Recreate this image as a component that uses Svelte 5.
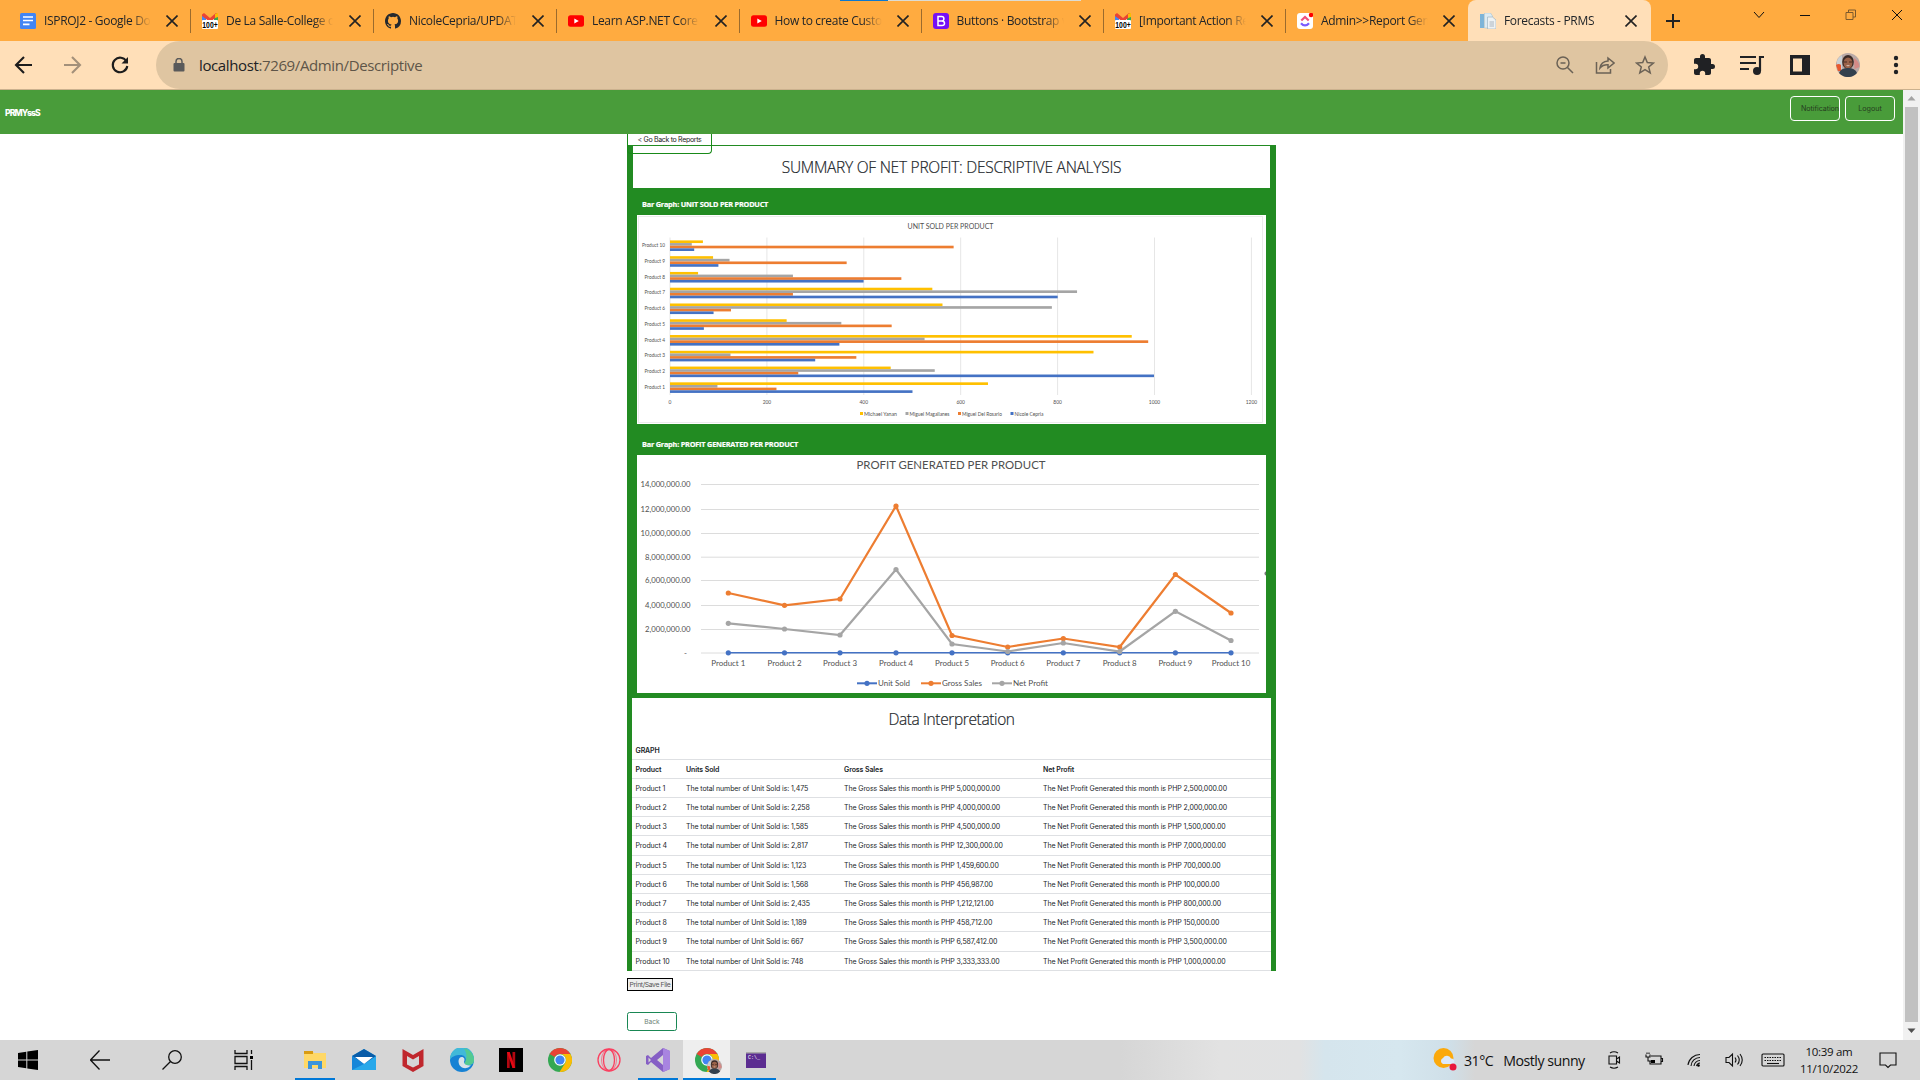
<script>
  const tabs = [
    { icon: 'docs', title: 'ISPROJ2 - Google Docs', w: 182 },
    { icon: 'gmail', title: 'De La Salle-College of', w: 183 },
    { icon: 'github', title: 'NicoleCepria/UPDATED', w: 183 },
    { icon: 'yt', title: 'Learn ASP.NET Core M', w: 182.5 },
    { icon: 'yt', title: 'How to create Custom', w: 182 },
    { icon: 'boot', title: 'Buttons · Bootstrap v5', w: 182.5 },
    { icon: 'gmail', title: '[Important Action Req', w: 182 },
    { icon: 'click', title: 'Admin>>Report Gene', w: 182 },
    { icon: 'page', title: 'Forecasts - PRMS', w: 183, active: true }
  ];

  const barColors = ['#ffc000', '#a5a5a5', '#ed7d31', '#4472c4'];
  // Bar lengths per salesperson, in units sold, top row first
  const bars = [
    { n: 10, v: [68, 45, 586, 50] },
    { n: 9, v: [89, 123, 365, 100] },
    { n: 8, v: [58, 254, 478, 400] },
    { n: 7, v: [542, 841, 254, 801] },
    { n: 6, v: [563, 789, 126, 90] },
    { n: 5, v: [241, 354, 458, 70] },
    { n: 4, v: [954, 526, 988, 350] },
    { n: 3, v: [875, 125, 385, 300] },
    { n: 2, v: [456, 547, 265, 1000] },
    { n: 1, v: [657, 98, 220, 501] }
  ];
  const ux = 0.484;
  const legend1 = [
    { x: 223, name: 'Michael Yanan', w: 33 },
    { x: 268.5, name: 'Miguel Magallanes', w: 40 },
    { x: 321, name: 'Miguel Del Rosario', w: 40 },
    { x: 373.5, name: 'Nicole Cepria', w: 29 }
  ];

  const px = [91.3, 147.5, 203, 259, 315, 370.7, 426.3, 482.7, 538.4, 594];
  const gross = [138, 150.3, 144, 51, 180.5, 192, 183.5, 192, 119.5, 158];
  const net = [168.3, 174, 180, 114.5, 189, 196.5, 188, 196.5, 156.3, 185.5];
  const units = px.map(() => 197.8);
  const grid = [29.5, 54.5, 78.5, 102.2, 125.5, 150.5, 174.5, 198];
  const amounts = ['14,000,000.00', '12,000,000.00', '10,000,000.00', '8,000,000.00', '6,000,000.00', '4,000,000.00', '2,000,000.00', '-'];
  const line = (ys) => ys.map((y, i) => `${px[i]},${y}`).join(' ');
  const series = [
    { c: '#4472c4', y: units, w: 1.6 },
    { c: '#ed7d31', y: gross, w: 2.2 },
    { c: '#a5a5a5', y: net, w: 2.2 }
  ];
  const legend2 = [
    { x: 220, name: 'Unit Sold', c: '#4472c4', w: 32 },
    { x: 284, name: 'Gross Sales', c: '#ed7d31', w: 40 },
    { x: 355, name: 'Net Profit', c: '#a5a5a5', w: 35 }
  ];

  const rows = [
    ['1,475', '5,000,000.00', '2,500,000.00'],
    ['2,258', '4,000,000.00', '2,000,000.00'],
    ['1,585', '4,500,000.00', '1,500,000.00'],
    ['2,817', '12,300,000.00', '7,000,000.00'],
    ['1,123', '1,459,600.00', '700,000.00'],
    ['1,568', '456,987.00', '100,000.00'],
    ['2,435', '1,212,121.00', '800,000.00'],
    ['1,189', '458,712.00', '150,000.00'],
    ['667', '6,587,412.00', '3,500,000.00'],
    ['748', '3,333,333.00', '1,000,000.00']
  ];
</script>

{#snippet favicon(kind)}
  <svg class="fav" viewBox="0 0 16 16">
    {#if kind === 'docs'}
      <rect width="16" height="16" rx="1.5" fill="#4285f4" /><path d="M3 4h10M3 7.5h10M3 11.3h6.500" stroke="#fff" stroke-width="1.700" />
    {:else if kind === 'gmail'}
      <path d="M0 1.500L2 0l6 5 6-5 2 1.500V8H0z" fill="#ea4335" /><path d="M0 3l4 3v3H0z" fill="#4285f4" /><path d="M16 3l-4 3v3h4z" fill="#34a853" /><path d="M13 1l3-1v4l-3 1z" fill="#fbbc04" /><path d="M4 6l4 3 4-3v3H4z" fill="#fff" />
      <rect y="7" width="16" height="9" rx="1" fill="#fff" /><text x="0.300" y="14.800" class="badge" textLength="15.400" lengthAdjust="spacingAndGlyphs">100+</text>
    {:else if kind === 'github'}
      <path fill="#24292f" d="M8 0C3.580 0 0 3.580 0 8c0 3.540 2.290 6.530 5.470 7.590.4.070.55-.17.55-.38 0-.19-.01-.82-.01-1.490-2.010.37-2.530-.49-2.690-.94-.09-.23-.48-.94-.82-1.130-.28-.15-.68-.52-.01-.53.63-.01 1.080.58 1.230.82.72 1.210 1.870.87 2.330.66.07-.52.28-.87.51-1.070-1.780-.2-3.640-.89-3.640-3.950 0-.87.31-1.590.82-2.150-.08-.2-.36-1.020.08-2.120 0 0 .67-.21 2.200.82a7.600 7.600 0 014 0c1.530-1.040 2.200-.82 2.200-.82.44 1.100.16 1.920.08 2.120.51.56.82 1.270.82 2.150 0 3.070-1.870 3.750-3.650 3.950.29.25.54.73.54 1.480 0 1.070-.01 1.930-.01 2.200 0 .21.15.46.55.38A8 8 0 0016 8c0-4.420-3.580-8-8-8z" />
    {:else if kind === 'yt'}
      <rect y="2.300" width="16" height="11.400" rx="2.500" fill="#f00" /><path d="M6.300 5.400v5.200L10.800 8z" fill="#fff" />
    {:else if kind === 'boot'}
      <rect width="16" height="16" rx="3" fill="#7510f5" /><path d="M5 3.500h3.600q2.300 0 2.300 2.200T8.600 8H5zM5 8h4q2.500 0 2.500 2.300T9 12.600H5z" fill="none" stroke="#fff" stroke-width="1.500" />
    {:else if kind === 'click'}
      <rect width="16" height="16" rx="3" fill="#fff" /><path d="M4.300 7.500L8 4l3.700 3.500" fill="none" stroke="#f0507a" stroke-width="2.200" /><path d="M4 10.200q4 4.500 8 0" fill="none" stroke="#7b5cff" stroke-width="2.300" /><circle cx="14" cy="2" r="2.200" fill="#f00" />
    {:else}
      <path d="M0 1h4v14H0z" fill="#7db4d8" /><path d="M4.500 0h6l2 3v12h-8z" fill="#dcebf4" stroke="#9dbdd0" stroke-width=".5" /><path d="M7.500 4h5L16 7v9H7.500z" fill="#eef2f4" stroke="#9fb4c0" stroke-width=".7" /><path d="M9.500 9h4.500M9.500 11h4.500M9.500 13h4.500" stroke="#9aa6b2" stroke-width=".8" />
    {/if}
  </svg>
{/snippet}

{#snippet avatar()}
  <svg viewBox="0 0 24 24">
    <circle cx="12" cy="12" r="12" fill="#b9a9a6" /><path d="M1 8a12 12 0 015-6v14H1z" fill="#c9d0d4" /><path d="M0 12q3-2 5 0v6H2z" fill="#e8582f" /><path d="M18 5q5 3 5.500 9l-5 2z" fill="#d58a86" />
    <ellipse cx="12" cy="9" rx="5.800" ry="7" fill="#3b2a26" /><ellipse cx="12" cy="10" rx="4.400" ry="5.500" fill="#9a6249" /><path d="M8 9h3M13 9h3" stroke="#4a2c22" stroke-width="1.200" /><path d="M10 12.500q2 1.500 4 0z" fill="#fff" /><path d="M3 20q2-5 9-5t9 5a12 12 0 01-18 0z" fill="#33404d" />
  </svg>
{/snippet}

{#snippet chrome()}
  <circle cx="12" cy="12" r="12" fill="#34a853" /><path d="M12 0a12 12 0 0110.400 6H12a6 6 0 00-5.200 3L1.600 6A12 12 0 0112 0z" fill="#ea4335" /><path d="M22.400 6A12 12 0 0111.500 24l5.700-9A6 6 0 0012 6z" fill="#fbbc04" /><circle cx="12" cy="12" r="5.800" fill="#fff" /><circle cx="12" cy="12" r="4.600" fill="#4285f4" />
{/snippet}

<div class="screen">
  <div class="load"></div>
  <header class="tabs">
    {#each tabs as t, i}
      <div class="tab" class:active={t.active} class:nosep={i === 7} style:width="{t.w}px">
        {@render favicon(t.icon)}
        <span class="title">{t.title}</span>
        <svg class="x" viewBox="0 0 12 12"><path d="M.5.5l11 11M11.500.5l-11 11" /></svg>
      </div>
    {/each}
    <svg class="plus" viewBox="0 0 14 14"><path d="M7 0v14M0 7h14" /></svg>
    <div class="win">
      <svg viewBox="0 0 12 12"><path d="M1 3l5 5.500L11 3" /></svg>
      <svg viewBox="0 0 12 12"><path d="M1 6.500h10" /></svg>
      <svg class="dim" viewBox="0 0 12 12"><path d="M1 3.500h7v7H1zM3.500 3.500v-2.500h7v7H8" /></svg>
      <svg viewBox="0 0 12 12"><path d="M1 1l10 10M11 1L1 11" /></svg>
    </div>
  </header>

  <div class="toolbar">
    <div class="nav">
      <svg viewBox="0 0 24 24"><path d="M20 12H4.500M12 4l-8 8 8 8" /></svg>
      <svg class="off" viewBox="0 0 24 24"><path d="M4 12h15.500M12 4l8 8-8 8" /></svg>
      <svg viewBox="0 0 24 24"><path d="M18.500 8.500A7.300 7.300 0 1019.300 13" /><path d="M20 4v6.500h-6.500z" class="solid" /></svg>
    </div>
    <div class="omni">
      <svg class="lock" viewBox="0 0 12 14"><rect x=".5" y="5" width="11" height="8.500" rx="1" fill="#5a5a5a" /><path d="M3 5.500V3.500a3 3 0 016 0v2" fill="none" stroke="#5a5a5a" stroke-width="1.500" /></svg>
      <span class="url"><b>localhost</b>:7269/Admin/Descriptive</span>
      <div class="acts">
        <svg viewBox="0 0 20 20"><circle cx="8" cy="8" r="6" /><path d="M12.500 12.500l5.500 5.500M5.500 8h5" /></svg>
        <svg viewBox="0 0 20 20"><path d="M1.500 7v11h14v-4M5 13q1-6.500 8-7V3l6 5-6 5V9.800q-5-.3-8 3.200z" /></svg>
        <svg viewBox="0 0 20 20"><path d="M10 2l2.300 5.600 6 .5-4.600 3.900 1.500 5.900-5.200-3.200-5.200 3.200 1.500-5.900L1.700 8.100l6-.5z" /></svg>
      </div>
    </div>
    <div class="ext">
      <svg viewBox="0 0 24 24"><path fill="#202124" d="M20.500 11H19V7c0-1.100-.9-2-2-2h-4V3.500a2.500 2.500 0 00-5 0V5H4c-1.100 0-2 .9-2 2v3.800h1.500a2.700 2.700 0 010 5.400H2V20c0 1.100.9 2 2 2h3.800v-1.500a2.700 2.700 0 015.400 0V22H17c1.100 0 2-.9 2-2v-4h1.500a2.500 2.500 0 000-5z" /></svg>
      <svg viewBox="0 0 24 24"><path d="M0 4h16M0 10h16M0 16h9M20 18V4h4" fill="none" stroke="#202124" stroke-width="2.200" /><circle cx="17" cy="18" r="4" fill="#202124" /></svg>
      <svg viewBox="0 0 24 24"><path fill="#202124" fill-rule="evenodd" d="M2 2h20v20H2zM5 5.500v13h9v-13z" /></svg>
      {@render avatar()}
      <svg viewBox="0 0 24 24"><g fill="#202124"><circle cx="12" cy="5" r="2.200" /><circle cx="12" cy="12" r="2.200" /><circle cx="12" cy="19" r="2.200" /></g></svg>
    </div>
  </div>

  <div class="view">
    <main>
      <nav class="appbar">
        <strong>PRMYssS</strong>
        <div class="appbtns"><button><span>Notification</span></button><button>Logout</button></div>
      </nav>
      <div class="content">
        <button class="goback">&lt; Go Back to Reports</button>
        <section class="report">
          <h1>SUMMARY OF NET PROFIT: DESCRIPTIVE ANALYSIS</h1>
          <h2>Bar Graph: UNIT SOLD PER PRODUCT</h2>
          <svg class="chart c1" viewBox="0 0 629 209">
            <rect width="629" height="209" fill="#fff" />
            <rect x="1.500" y="1.500" width="624" height="206" fill="none" stroke="#e8e8e8" stroke-width=".8" />
            <text x="270.500" y="13.800" class="t1" textLength="86" lengthAdjust="spacingAndGlyphs">UNIT SOLD PER PRODUCT</text>
            {#each [0, 1, 2, 3, 4, 5, 6] as g}
              <path d="M{33 + g * 96.900} 22.500V180" stroke="#e6e6e6" />
              <text x={33 + g * 96.900} y="188.500" class="s" text-anchor="middle">{g * 200}</text>
            {/each}
            {#each bars as b, i}
              <text x="28" y={32.300 + i * 15.720} class="s" text-anchor="end" textLength={b.n === 10 ? 23 : 20.500} lengthAdjust="spacingAndGlyphs">Product {b.n}</text>
              {#each b.v as v, k}
                <rect x="33" y={25.400 + i * 15.770 + k * 2.650} width={v * ux} height="2.650" fill={barColors[k]} />
              {/each}
            {/each}
            {#each legend1 as l, k}
              <rect x={l.x} y="197" width="3" height="3" fill={barColors[k]} />
              <text x={l.x + 4} y="200.600" class="s" textLength={l.w} lengthAdjust="spacingAndGlyphs">{l.name}</text>
            {/each}
          </svg>
          <h2 class="second">Bar Graph: PROFIT GENERATED PER PRODUCT</h2>
          <svg class="chart c2" viewBox="0 0 629 238">
            <rect width="629" height="238" fill="#fff" />
            <text x="219.500" y="14.300" class="t2" textLength="189" lengthAdjust="spacingAndGlyphs">PROFIT GENERATED PER PRODUCT</text>
            {#each grid as y, i}
              <path d="M64 {y}H622" stroke="#dcdcdc" />
              <text x={i === 7 ? 50 : 53.500} y={y + 2.800} class="m" text-anchor="end" textLength={i === 7 ? 3 : i < 3 ? 50 : 45.500} lengthAdjust="spacingAndGlyphs">{amounts[i]}</text>
            {/each}
            {#each series as s}
              <polyline points={line(s.y)} fill="none" stroke={s.c} stroke-width={s.w} />
              {#each s.y as y, i}<circle cx={px[i]} cy={y} r="2.600" fill={s.c} />{/each}
            {/each}
            {#each px as x, i}
              <text {x} y="211.200" class="m" text-anchor="middle" textLength={i === 9 ? 38.500 : 34} lengthAdjust="spacingAndGlyphs">Product {i + 1}</text>
            {/each}
            {#each legend2 as l}
              <path d="M{l.x} 228.300h20" stroke={l.c} stroke-width="2" /><circle cx={l.x + 10} cy="228.300" r="2.600" fill={l.c} />
              <text x={l.x + 21} y="231" class="m" textLength={l.w} lengthAdjust="spacingAndGlyphs">{l.name}</text>
            {/each}
            <path d="M629 116.500a1.500 2 0 000 4z" fill="#777" />
          </svg>
          <div class="data">
            <h3>Data Interpretation</h3>
            <div class="row head"><span>GRAPH</span></div>
            <div class="row head"><span>Product</span><span>Units Sold</span><span>Gross Sales</span><span>Net Profit</span></div>
            {#each rows as r, i}
              <div class="row"><span>Product {i + 1}</span><span>The total number of Unit Sold is: {r[0]}</span><span>The Gross Sales this month is PHP {r[1]}</span><span>The Net Profit Generated this month is PHP {r[2]}</span></div>
            {/each}
          </div>
        </section>
        <button class="print">Print/Save File</button>
        <button class="back">Back</button>
      </div>
    </main>
    <div class="scroll">
      <svg viewBox="0 0 17 17"><path d="M4.500 10.500h8L8.500 6z" fill="#a3a3a3" /></svg>
      <div class="thumb"></div>
      <svg viewBox="0 0 17 17"><path d="M4.500 6.500h8l-4 4.500z" fill="#505050" /></svg>
    </div>
  </div>

  <footer class="taskbar">
    <div class="sys">
      <svg viewBox="0 0 20 20"><path d="M0 3l8.300-1.200v7.700H0zM9.300 1.600L20 0v9.500H9.300zM0 10.500h8.300v7.700L0 17zM9.300 10.500H20V20L9.300 18.400z" fill="#000" /></svg>
      <svg class="ln" viewBox="0 0 20 20"><path d="M20 10H.5M9.500.5L.5 10l9 9.500" /></svg>
      <svg class="ln" viewBox="0 0 20 20"><circle cx="13" cy="7" r="6.300" /><path d="M8.500 11.500L.5 19.500" /></svg>
      <svg class="ln" viewBox="0 0 20 20"><path d="M1 0v3.500h12V0M1 20v-3.500h12V20M1 6.500h12v7H1zM17.500 0v4M17.500 10v10" /><path d="M16 6h3v3h-3z" fill="#000" stroke="none" /></svg>
    </div>
    <div class="apps">
      <div class="app run"><svg viewBox="0 0 24 24"><path d="M1 3h8l2 2h12v15H1z" fill="#ffd867" /><path d="M1 3h9v3H1z" fill="#d99b12" /><path d="M5 13h14v8h-4v-4H9v4H5z" fill="#3b94dc" /></svg></div>
      <div class="app"><svg viewBox="0 0 24 24"><path d="M0 8l12-7 12 7v14H0z" fill="#28a8ea" /><path d="M0 8l12-7 12 7-12 8z" fill="#0a5ca8" /><path d="M3 9h18l-9 7z" fill="#fff" /><path d="M0 8l12 8L0 22z" fill="#1686d9" /></svg></div>
      <div class="app"><svg viewBox="0 0 24 24"><path d="M1.500 1L12 7l10.500-6v17L12 24 1.500 18zM6 8v8.500l6 3 6-3V8l-6 3.500z" fill-rule="evenodd" fill="#c0272d" /></svg></div>
      <div class="app"><svg viewBox="0 0 24 24"><circle cx="12" cy="12" r="12" fill="#1682d4" /><path d="M0 10A12 12 0 0124 12c0 4-3 5-6 5-2 0-4-.5-3.500-2 3-3 1-8-4-8C5 7 1 9 0 12z" fill="#41b9d8" /><path d="M14 .2A12 12 0 0124 12c0 4-3 5-6 5-2 0-4-.5-3.500-2 2.500-4 3-9-.5-14.800z" fill="#5bd078" opacity=".75" /><path d="M8.500 13q.5-4.500 4-4 3 1 1.500 5 0 3.500 7 3.500-4 4-9 2-3.500-2-3.500-6.500z" fill="#d8e2e8" /></svg></div>
      <div class="app"><svg viewBox="0 0 24 24"><path d="M0 0h24v24H0z" fill="#000" /><path d="M8 4h2.700v16H8zM13.500 4h2.700v16h-2.700z" fill="#b10710" /><path d="M8 4h2.700l5.500 16h-2.700z" fill="#e50914" /></svg></div>
      <div class="app"><svg viewBox="0 0 24 24">{@render chrome()}</svg></div>
      <div class="app"><svg viewBox="0 0 24 24"><g fill="none" stroke="#fa4060" stroke-width="1.300"><circle cx="12" cy="12" r="11" /><ellipse cx="12" cy="12" rx="5.500" ry="10.500" /><ellipse cx="12" cy="12" rx="7.500" ry="10.800" stroke-width=".6" /></g></svg></div>
      <div class="app run"><svg viewBox="0 0 24 24"><path d="M17 0l7 3v18l-7 3L5 14l-3 3-2-1V8l2-1 3 3zM17 7l-6 5 6 5zM2.500 9.500v5L5 12z" fill="#865fc5" fill-rule="evenodd" /><path d="M17 0l7 3v18l-7 3z" fill="#a884e0" /></svg></div>
      <div class="app run cur"><svg viewBox="0 0 24 24">{@render chrome()}</svg><div class="mini">{@render avatar()}</div></div>
      <div class="app run"><svg viewBox="0 0 24 24"><path d="M2 4h20v16H2z" fill="#5c2d91" /><path d="M2 4h20v1.500H2z" fill="#aaa" /><text x="4" y="11" class="cmd">C:\_</text></svg></div>
    </div>
    <div class="tray">
      <svg class="sun" viewBox="0 0 24 24"><circle cx="10.500" cy="10" r="10" fill="#fba90c" /><path d="M10 16a3.200 3.200 0 010-6 4.500 4.500 0 018 .5 3 3 0 012 5.500z" fill="#dce9fa" /><circle cx="20" cy="19" r="3.500" fill="#e8173d" /></svg>
      <span class="weather"><span>31°C</span><span>Mostly sunny</span></span>
      <svg class="ln" viewBox="0 0 16 18"><path d="M3 5h7.500v8H3zM10.500 8l3-2v6l-3-2M4 2q4-2.500 8 0M4 16q4 2.500 8 0" /></svg>
      <svg class="ln" viewBox="0 0 16 18"><path d="M5 5h10v8H4v-3M15 7.500h1.500v3H15M0 3.500v2.500h4V3.500M2 6v4h3M1 1.500V3M3 1.500V3" /><path d="M5 9h4v3H5z" fill="#000" stroke="none" /></svg>
      <svg class="ln" viewBox="0 0 16 18"><path d="M2 14A12 12 0 0114 3.500M5 15A9 9 0 0114 6.500M8 15A6 6 0 0114 9.500M10.500 15A4 4 0 0114 12" /><circle cx="12.500" cy="14.500" r="1.300" fill="#000" stroke="none" /></svg>
      <svg class="ln vol" viewBox="0 0 16 18"><path d="M0 6.500h3l3.500-3.500v12L3 11.500H0zM9 6.500q2 2.500 0 5M11.500 4.500q3.500 4.500 0 9M14 3q4.500 6 0 12" /></svg>
      <svg class="ln kb" viewBox="0 0 24 14"><rect x="1" y="1" width="22" height="12" rx="1" /><path d="M3.500 4.500h17M3.500 7.500h17" stroke-dasharray="1.500 1" /><path d="M6 10.500h12" /></svg>
      <div class="clock"><span>10:39 am</span><span>11/10/2022</span></div>
      <svg class="ln note" viewBox="0 0 18 18"><path d="M1 2h16v12h-5.500L9 16.500 6.500 14H1z" /></svg>
    </div>
  </footer>
</div>

<style>
  :global(body) { overflow: hidden; background: #fff; }
  .screen { width: 1920px; height: 1080px; display: flex; flex-direction: column; position: relative; font-family: 'Open Sans', sans-serif; color: #212529; background: #fff; overflow: hidden; }
  svg { display: block; flex: none; }
  button { font: inherit; padding: 0; margin: 0; background: #fff; box-sizing: border-box; }
  h1, h2, h3 { margin: 0; font-weight: 300; }

  .load { position: absolute; left: 840px; top: 0; width: 241px; height: 1px; background: linear-gradient(90deg, #0b78d0 48px, #dcdcd4 48px); }
  .tabs { height: 41px; background: #ffab40; display: flex; align-items: center; padding-left: 9px; box-sizing: border-box; flex: none; }
  .tab { height: 41px; display: flex; align-items: center; box-sizing: border-box; padding: 1px 13px 0 11px; position: relative; flex: none; }
  .tab::after { content: ''; position: absolute; right: 0; top: 9px; width: 1px; height: 24px; background: #9b6b2d; }
  .tab.nosep::after, .tab.active::after { display: none; }
  .tab.active { background: #ffdfb8; border-radius: 8px 8px 0 0; padding-left: 12px; padding-right: 14px; }
  .fav { width: 16px; height: 16px; }
  .badge { font: bold 9px 'Liberation Sans', sans-serif; fill: #000; }
  .title { margin-left: 8px; width: 107px; flex: none; overflow: hidden; white-space: nowrap; font-size: 12px; letter-spacing: -0.32px; line-height: 18px; -webkit-mask-image: linear-gradient(90deg, #000 82%, transparent); mask-image: linear-gradient(90deg, #000 82%, transparent); }
  .x { width: 12px; height: 12px; margin-left: auto; fill: none; stroke: #222; stroke-width: 1.6; }
  .plus { width: 14px; height: 14px; margin-left: 15px; stroke: #222; stroke-width: 2; }
  .win { margin-left: auto; display: flex; gap: 34px; padding: 0 17px 12px 0; }
  .win svg { width: 12px; height: 12px; fill: none; stroke: #111; stroke-width: 1; }
  .win .dim { stroke: #7c5a2c; }

  .toolbar { height: 49px; background: #ffdfb8; border-bottom: 1px solid #cbb18e; box-sizing: border-box; display: flex; flex: none; align-items: center; }
  .nav { width: 156px; padding-left: 12px; box-sizing: border-box; display: flex; gap: 24px; flex: none; }
  .nav svg { width: 24px; height: 24px; fill: none; stroke: #1c1c1c; stroke-width: 2.1; }
  .nav .off { stroke: #a3907a; }
  .nav .solid { fill: #1c1c1c; stroke: none; }
  .omni { width: 1512px; height: 48px; border-radius: 24px; background: #dfc5a1; display: flex; align-items: center; flex: none; padding: 0 13px 0 17px; box-sizing: border-box; }
  .lock { width: 12px; height: 14px; }
  .url { margin-left: 14px; font-size: 15px; letter-spacing: -0.38px; color: #5e5548; }
  .url b { font-weight: 400; color: #202124; }
  .acts { margin-left: auto; display: flex; gap: 20px; }
  .acts svg { width: 20px; height: 20px; fill: none; stroke: #6b6256; stroke-width: 1.5; }
  .ext { display: flex; gap: 24px; padding-left: 24px; }
  .ext svg, .ext :global(svg) { width: 24px; height: 24px; }

  .view { height: 950px; display: flex; flex: none; }
  main { width: 1903px; flex: none; }
  .appbar { height: 44px; background: #499c3a; display: flex; justify-content: space-between; align-items: flex-start; padding: 6px 8px 0 5px; box-sizing: border-box; }
  .appbar strong { color: #fff; font: 800 8.6px/14px Inter, sans-serif; padding-top: 10px; letter-spacing: -0.85px; }
  .appbtns { display: flex; gap: 5px; }
  .appbtns button { width: 50px; height: 25px; background: none; border: 1px solid #fff; border-radius: 4px; font: 7.2px Inter, sans-serif; color: #263c20; white-space: nowrap; padding: 0; }
  .appbtns button span { display: block; padding-left: 10px; letter-spacing: -0.1px; }
  .content { width: 649px; margin-left: 627px; display: flex; flex-direction: column; align-items: flex-start; }
  .goback { width: 85px; height: 20px; border: 1px solid #198a19; border-top: 0; border-radius: 0 0 4px 4px; font: 7px/9px Inter, sans-serif; letter-spacing: -0.32px; color: #222; padding-bottom: 8px; margin-bottom: -9px; position: relative; background: none; white-space: nowrap; z-index: 1; }
  .report { width: 649px; height: 826px; background: #228b22; display: flex; flex-direction: column; align-items: center; padding-top: 1px; box-sizing: border-box; }
  h1 { width: 637px; height: 42px; background: #fff; text-align: center; font-size: 15.5px; line-height: 43px; white-space: nowrap; flex: none; letter-spacing: -0.25px; -webkit-text-stroke: 0.2px #212529; }
  h2 { width: 619px; height: 27px; color: #fff; font-size: 7.3px; font-weight: 700; letter-spacing: -0.2px; line-height: 32px; flex: none; white-space: nowrap; -webkit-text-stroke: 0.2px #fff; }
  h2.second { height: 31px; line-height: 40px; }
  .chart { width: 629px; font-family: Lato, sans-serif; }
  .c1 { height: 209px; }
  .c2 { height: 238px; }
  .chart text { fill: #505050; }
  .chart .t1 { font-size: 7.8px; }
  .chart .t2 { font-size: 12px; }
  .chart .s { font-size: 4.9px; }
  .chart .m { font-size: 8px; }
  .data { width: 639px; height: 273px; margin-top: 5px; background: #fff; flex: none; }
  h3 { height: 42.5px; line-height: 43px; text-align: center; font-size: 15.5px; letter-spacing: -0.38px; -webkit-text-stroke: 0.2px #212529; }
  .row { height: 19.2px; display: grid; grid-template-columns: 50.5px 158px 199px 1fr; padding-left: 3.5px; box-sizing: border-box; border-bottom: 1px solid #dee0e3; font: 7px/19px Inter, sans-serif; letter-spacing: -0.1px; white-space: nowrap; }
  .head { font-weight: 600; }
  .print { width: 46px; height: 13px; margin-top: 7px; border: 1px solid #000; background: #efefef; font: 6.8px/9px Inter, sans-serif; color: #555; white-space: nowrap; letter-spacing: -0.36px; }
  .back { width: 50px; height: 19px; margin-top: 21px; border: 1px solid #198754; border-radius: 2.5px; font: 6.6px Inter, sans-serif; color: #6d8478; }
  .scroll { width: 17px; background: #f1f1f1; display: flex; flex-direction: column; align-items: center; }
  .scroll svg { width: 17px; height: 17px; }
  .thumb { width: 13px; height: 915px; background: #c1c1c1; }

  .taskbar { height: 40px; flex: none; display: flex; align-items: center; background: linear-gradient(90deg, #d6d6d6 1120px, #e2e2e2 1220px, #e1e2e3 1300px, #d5e5ed 1325px, #d6e7ef 1400px, #cfdfe8 1450px, #d6d6d6 1475px); }
  .sys { display: flex; gap: 52px; padding-left: 18px; width: 290px; box-sizing: border-box; flex: none; }
  .sys svg { width: 20px; height: 20px; }
  .ln { fill: none; stroke: #111; stroke-width: 1.3; }
  .apps { display: flex; }
  .app { width: 49px; height: 40px; display: flex; align-items: center; justify-content: center; position: relative; }
  .app svg { width: 24px; height: 24px; }
  .run::after { content: ''; position: absolute; left: 5px; right: 4px; bottom: 0; height: 2px; background: #0078d7; }
  .cur { background: linear-gradient(#eee, #eee) 1px 0 / 47px 40px no-repeat; }
  .cur::after { left: 1px; right: 1px; }
  .mini { position: absolute; left: 25px; top: 19px; width: 15px; height: 15px; }
  .mini :global(svg) { width: 15px; height: 15px; }
  .cmd { font: 5px 'Liberation Mono', monospace; fill: #fff; }
  .tray { margin-left: auto; display: flex; align-items: center; padding-right: 23px; }
  .sun { width: 24px; height: 24px; }
  .weather { display: flex; gap: 10px; font-size: 14.2px; letter-spacing: -0.5px; margin-left: 7px; width: 142px; white-space: nowrap; color: #111; }
  .tray .ln { width: 16px; height: 18px; margin-right: 24px; overflow: visible; stroke-width: 1.1; }
  .tray .vol { margin-right: 19px; }
  .tray .kb { width: 24px; height: 14px; margin-right: 14px; }
  .tray .note { width: 18px; height: 18px; margin: 0; }
  .clock { display: flex; flex-direction: column; align-items: center; width: 60px; margin-right: 20px; font-size: 11.5px; line-height: 17.5px; letter-spacing: -0.3px; color: #111; white-space: nowrap; }
</style>
